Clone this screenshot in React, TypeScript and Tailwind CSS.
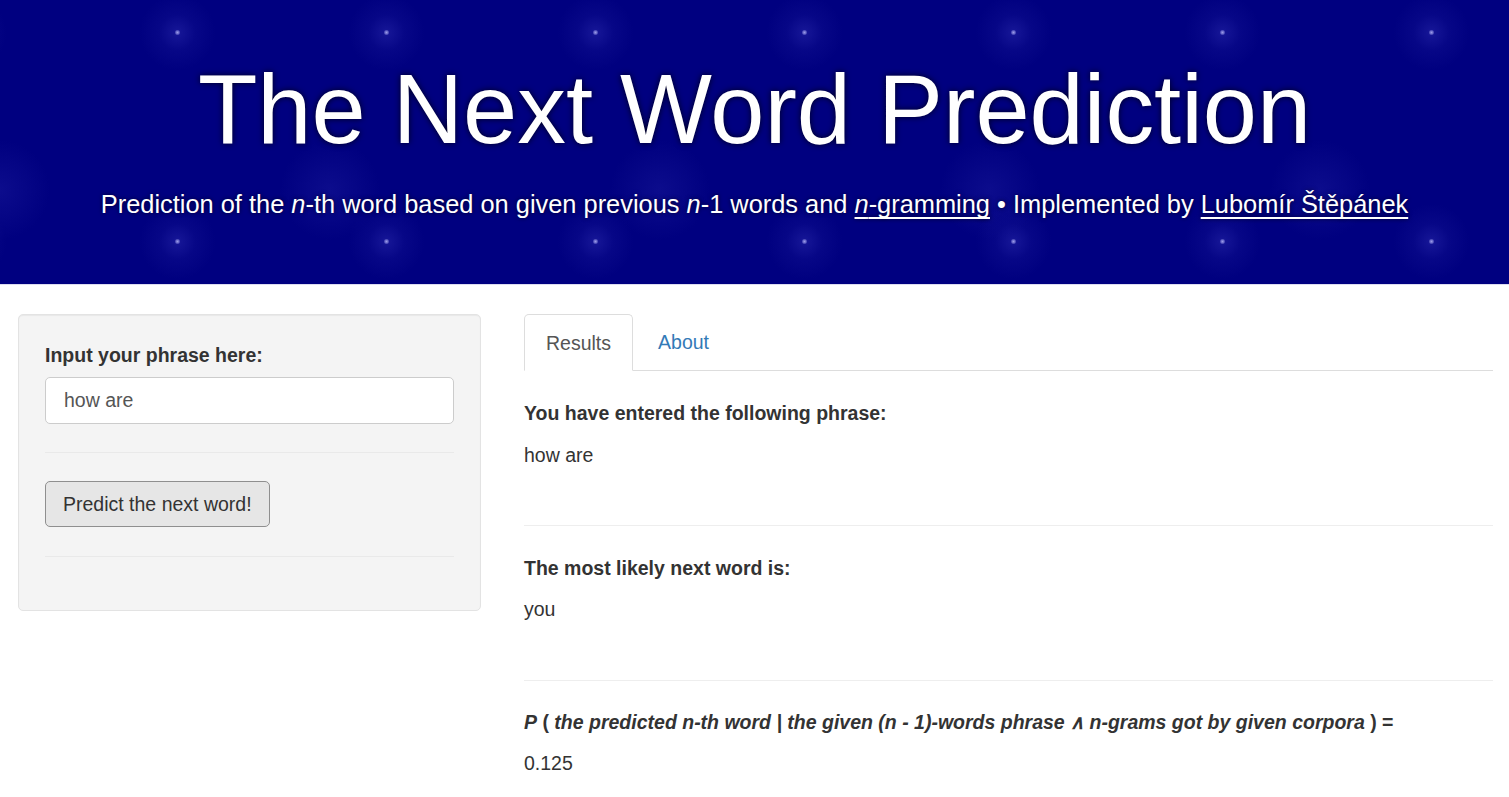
import React from 'react'

const sans = { fontFamily: '"Liberation Sans", Arial, sans-serif' }

function Header() {
  return (
    <header
      className="h-[285px] border-b border-[#dcdcf0] bg-[#000080] bg-[radial-gradient(circle_at_center,rgba(170,170,240,0.9)_0px,rgba(150,150,235,0.7)_1.5px,rgba(50,50,180,0.4)_3px,rgba(30,30,160,0.22)_18px,rgba(0,0,128,0)_38px),radial-gradient(circle_at_center,rgba(40,40,170,0.3)_0px,rgba(0,0,128,0)_50px)] bg-[size:209px_209px,330px_250px] bg-[position:73px_-72px,-165px_65px] flex flex-col items-center text-white"
    >
      <h1 className="mt-[51px] text-[97.4px] leading-[118px] [text-shadow:0_0_6px_rgba(0,0,0,0.8)]">
        The Next Word Prediction
      </h1>
      <p className="mt-[20px] text-[25.4px] leading-[30px] [text-shadow:0_0_4px_rgba(0,0,0,0.7)]">
        Prediction of the <i>n</i>-th word based on given previous <i>n</i>-1 words and{' '}
        <a className="underline underline-offset-[4px] [text-decoration-skip-ink:none]" href="#">
          <i>n</i>-gramming
        </a>{' '}
        • Implemented by{' '}
        <a className="underline underline-offset-[4px] [text-decoration-skip-ink:none]" href="#">
          Lubomír Štěpánek
        </a>
      </p>
    </header>
  )
}

function Sidebar() {
  return (
    <div className="w-[463px] shrink-0 self-start rounded-[5px] border border-[#e3e3e3] bg-[#f4f4f4] px-[26px] pt-[27px] pb-[53px] shadow-[inset_0_1px_1px_rgba(0,0,0,0.05)]">
      <label className="block font-bold leading-[27px]">Input your phrase here:</label>
      <input
        className="mt-[8px] block h-[47px] w-full rounded-[5px] border border-[#cccccc] bg-white px-[18px] text-[#555] outline-none"
        defaultValue="how are"
      />
      <hr className="mt-[28px] border-t border-[#e9e9e9]" />
      <button className="mt-[28px] h-[46px] rounded-[5px] border border-[#8f8f8f] bg-[#e6e6e6] px-[17px] leading-[27px]">
        Predict the next word!
      </button>
      <hr className="mt-[29px] border-t border-[#e9e9e9]" />
    </div>
  )
}

function Results() {
  return (
    <div className="min-w-0 flex-1">
      <div className="flex border-b border-[#dddddd]">
        <div className="-mb-px rounded-t-[5px] border border-[#dddddd] border-b-white bg-white px-[21px] pt-[15px] pb-[13px] leading-[27px] text-[#555555]">
          Results
        </div>
        <div className="px-[25px] pt-[15px] pb-[13px] leading-[27px] text-[#337ab7]">About</div>
      </div>
      <div className="leading-[27px]">
        <p className="mt-[29px] font-bold">You have entered the following phrase:</p>
        <p className="mt-[15px]">how are</p>
        <hr className="mt-[56px] border-t border-[#eeeeee]" />
        <p className="mt-[29px] font-bold">The most likely next word is:</p>
        <p className="mt-[14px]">you</p>
        <hr className="mt-[57px] border-t border-[#eeeeee]" />
        <p className="mt-[28px] font-bold">
          <i>P</i> ( <i>the predicted n-th word | the given (n - 1)-words phrase ∧ n-grams got by given corpora</i> ) =
        </p>
        <p className="mt-[14px]">0.125</p>
      </div>
    </div>
  )
}

export default function App() {
  return (
    <div className="min-h-[797px] bg-white text-[19.5px] text-[#333333]" style={sans}>
      <Header />
      <main className="flex gap-[43px] pl-[18px] pr-[16px] pt-[29px]">
        <Sidebar />
        <Results />
      </main>
    </div>
  )
}
